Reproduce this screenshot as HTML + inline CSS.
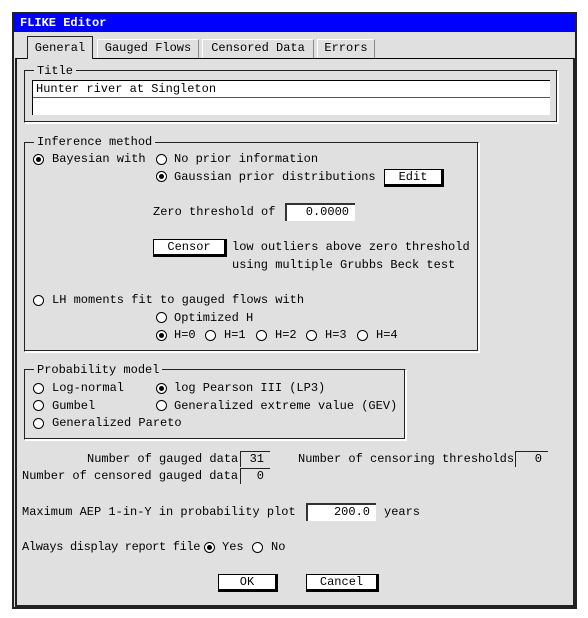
<!DOCTYPE html>
<html><head><style>
*{margin:0;padding:0;box-sizing:border-box}
body{width:588px;height:618px;background:#fff;position:relative;overflow:hidden;font:12px "Liberation Mono",monospace;color:#000}
.a{position:absolute}
.t{position:absolute;line-height:14px;white-space:pre}
.win{left:12px;top:12px;width:565px;height:597px;background:#e0e0e0;border:2px solid #222}
.tb{left:14px;top:14px;width:561px;height:18px;background:#0000ff;color:#fff}
.grp{position:absolute;border:1px solid #222;border-right-color:#fff;border-bottom-color:#fff;box-shadow:inset -1px -1px 0 #222,1px 1px 0 #fff}
.lbl{position:absolute;background:#e0e0e0;padding:0 3px;line-height:14px}
.fld{position:absolute;background:#fff;border-top:2px solid #333;border-left:2px solid #333;text-align:right;padding-right:6px;line-height:15px}
.btn{position:absolute;background:#fff;border:1px solid #000;border-right:3px solid #000;border-bottom:3px solid #000;text-align:center;line-height:15px}
.r{position:absolute;width:11px;height:11px;border:1px solid #000;border-radius:50%;background:#fff}
.r.on::after{content:"";position:absolute;left:2px;top:2px;width:5px;height:5px;border-radius:50%;background:#000}
.tab{position:absolute;top:39px;height:19px;border:1px solid #fff;border-right:1px solid #888;border-bottom:none;line-height:17px;text-align:center}
.nb{position:absolute;border-top:1px solid #222;border-left:1px solid #222;text-align:right;padding-right:6px;line-height:14px;height:16px}
</style></head><body>
<div class="a win"></div>
<div class="a tb"><span class="t" style="left:6px;top:2px;font-weight:bold">FLIKE Editor</span></div>
<div class="a" style="left:15px;top:58px;width:560px;height:549px;border-top:1px solid #000;border-left:2px solid #222;border-right:2px solid #222;border-bottom:2px solid #222"></div>
<div class="tab" style="left:27px;top:36px;width:66px;height:23px;background:#e0e0e0;border:1px solid #222;border-bottom:none;line-height:22px">General</div>
<div class="tab" style="left:97px;width:102px">Gauged Flows</div>
<div class="tab" style="left:202px;width:112px">Censored Data</div>
<div class="tab" style="left:317px;width:58px">Errors</div>

<div class="grp" style="left:24px;top:70px;width:534px;height:53px"></div>
<div class="lbl" style="left:34px;top:64px">Title</div>
<div class="a" style="left:32px;top:80px;width:518px;height:35px;background:#fff;border-top:1px solid #000;border-left:1px solid #000"></div>
<div class="a" style="left:33px;top:97px;width:517px;height:1px;background:#555"></div>
<div class="t" style="left:36px;top:82px">Hunter river at Singleton</div>

<div class="grp" style="left:24px;top:142px;width:455px;height:210px"></div>
<div class="lbl" style="left:34px;top:135px">Inference method</div>
<div class="r on" style="left:33px;top:154px"></div><div class="t" style="left:52px;top:152px">Bayesian with</div>
<div class="r" style="left:156px;top:154px"></div><div class="t" style="left:174px;top:152px">No prior information</div>
<div class="r on" style="left:156px;top:171px"></div><div class="t" style="left:174px;top:170px">Gaussian prior distributions</div>
<div class="btn" style="left:384px;top:169px;width:60px;height:18px">Edit</div>
<div class="t" style="left:153px;top:205px">Zero threshold of</div>
<div class="fld" style="left:285px;top:203px;width:70px;height:18px">0.0000</div>
<div class="btn" style="left:153px;top:239px;width:74px;height:18px">Censor</div>
<div class="t" style="left:232px;top:240px">low outliers above zero threshold</div>
<div class="t" style="left:232px;top:258px">using multiple Grubbs Beck test</div>
<div class="r" style="left:33px;top:295px"></div><div class="t" style="left:52px;top:293px">LH moments fit to gauged flows with</div>
<div class="r" style="left:156px;top:312px"></div><div class="t" style="left:174px;top:311px">Optimized H</div>
<div class="r on" style="left:156px;top:330px"></div><div class="t" style="left:174px;top:328px">H=0</div>
<div class="r" style="left:205px;top:330px"></div><div class="t" style="left:224px;top:328px">H=1</div>
<div class="r" style="left:256px;top:330px"></div><div class="t" style="left:275px;top:328px">H=2</div>
<div class="r" style="left:306px;top:330px"></div><div class="t" style="left:325px;top:328px">H=3</div>
<div class="r" style="left:357px;top:330px"></div><div class="t" style="left:376px;top:328px">H=4</div>

<div class="grp" style="left:24px;top:369px;width:382px;height:71px"></div>
<div class="lbl" style="left:34px;top:363px">Probability model</div>
<div class="r" style="left:33px;top:383px"></div><div class="t" style="left:52px;top:381px">Log-normal</div>
<div class="r on" style="left:156px;top:383px"></div><div class="t" style="left:174px;top:381px">log Pearson III (LP3)</div>
<div class="r" style="left:33px;top:400px"></div><div class="t" style="left:52px;top:399px">Gumbel</div>
<div class="r" style="left:156px;top:400px"></div><div class="t" style="left:174px;top:399px">Generalized extreme value (GEV)</div>
<div class="r" style="left:33px;top:418px"></div><div class="t" style="left:52px;top:416px">Generalized Pareto</div>

<div class="t" style="left:87px;top:452px">Number of gauged data</div>
<div class="nb" style="left:240px;top:451px;width:30px">31</div>
<div class="t" style="left:298px;top:452px">Number of censoring thresholds</div>
<div class="nb" style="left:515px;top:451px;width:33px">0</div>
<div class="t" style="left:22px;top:469px">Number of censored gauged data</div>
<div class="nb" style="left:240px;top:468px;width:30px">0</div>

<div class="t" style="left:22px;top:505px">Maximum AEP 1-in-Y in probability plot</div>
<div class="fld" style="left:306px;top:503px;width:70px;height:18px">200.0</div>
<div class="t" style="left:384px;top:505px">years</div>

<div class="t" style="left:22px;top:540px;letter-spacing:-0.35px">Always display report file</div>
<div class="r on" style="left:204px;top:542px"></div><div class="t" style="left:222px;top:540px">Yes</div>
<div class="r" style="left:252px;top:542px"></div><div class="t" style="left:271px;top:540px">No</div>

<div class="btn" style="left:218px;top:574px;width:60px;height:18px">OK</div>
<div class="btn" style="left:306px;top:574px;width:73px;height:18px">Cancel</div>
</body></html>
